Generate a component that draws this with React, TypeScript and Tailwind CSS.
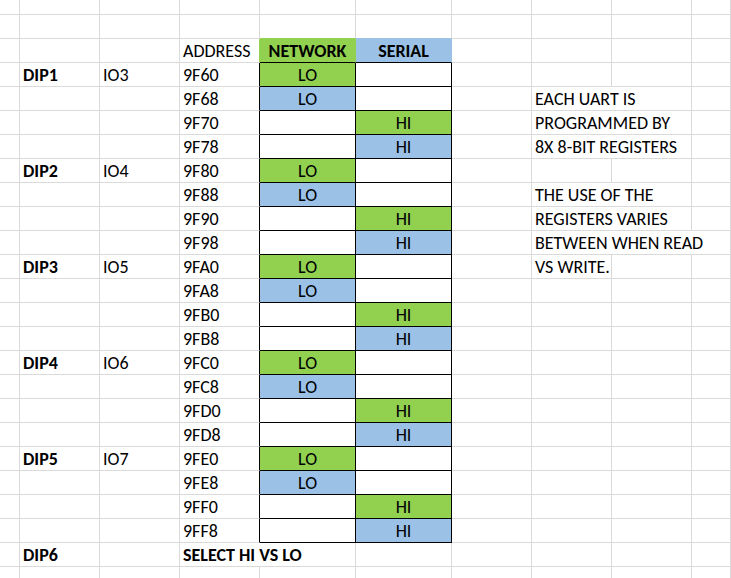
import React from "react";

const GREEN = "bg-[#92d050]";
const BLUE = "bg-[#9bc2e6]";

type CellProps = {
  children?: React.ReactNode;
  span?: 1 | 2 | 3;
  cls?: string;
  center?: boolean;
  bold?: boolean;
};

function Cell({ children, span = 1, cls = "", center = false, bold = false }: CellProps) {
  const spanCls = span === 3 ? "col-span-3" : span === 2 ? "col-span-2" : "";
  return (
    <div
      className={`${spanCls} border-r border-b border-[#dadada] flex items-end whitespace-nowrap overflow-visible pb-[1px] ${
        center ? "justify-center" : "pl-[3px]"
      } ${bold ? "font-bold" : ""} ${cls}`}
    >
      {children}
    </div>
  );
}

const addrs = [
  "9F60", "9F68", "9F70", "9F78",
  "9F80", "9F88", "9F90", "9F98",
  "9FA0", "9FA8", "9FB0", "9FB8",
  "9FC0", "9FC8", "9FD0", "9FD8",
  "9FE0", "9FE8", "9FF0", "9FF8",
];

const notes: Record<number, { text: string; span: 1 | 2 | 3 }> = {
  1: { text: "EACH UART IS", span: 2 },
  2: { text: "PROGRAMMED BY", span: 2 },
  3: { text: "8X 8-BIT REGISTERS", span: 2 },
  5: { text: "THE USE OF THE", span: 2 },
  6: { text: "REGISTERS VARIES", span: 2 },
  7: { text: "BETWEEN WHEN READ", span: 3 },
  8: { text: "VS WRITE.", span: 1 },
};

function EmptyCells({ n, cls = "" }: { n: number; cls?: string }) {
  return (
    <>
      {Array.from({ length: n }).map((_, i) => (
        <Cell key={i} cls={cls} />
      ))}
    </>
  );
}

export default function App() {
  const rows: React.ReactNode[] = [];

  rows.push(<EmptyCells key="r0" n={10} />);
  rows.push(
    <React.Fragment key="r1">
      <EmptyCells n={4} />
      <Cell cls="border-b-[#92d050]" />
      <Cell cls="border-b-[#9bc2e6]" />
      <EmptyCells n={4} />
    </React.Fragment>
  );
  rows.push(
    <React.Fragment key="r2">
      <EmptyCells n={3} />
      <Cell cls="border-r-[#92d050]">ADDRESS</Cell>
      <Cell center bold cls={`${GREEN} border-r-[#92d050] border-b-black`}>
        NETWORK
      </Cell>
      <Cell center bold cls={`${BLUE} border-r-[#9bc2e6] border-b-black`}>
        SERIAL
      </Cell>
      <EmptyCells n={4} />
    </React.Fragment>
  );

  addrs.forEach((a, i) => {
    const g = Math.floor(i / 4);
    const k = i % 4;
    const note = notes[i];
    const dCls = k === 0 ? GREEN : k === 1 ? BLUE : "";
    const eCls = k === 2 ? GREEN : k === 3 ? BLUE : "";
    const noteSpan = note ? note.span : 1;
    rows.push(
      <React.Fragment key={`d${i}`}>
        <Cell />
        <Cell bold>{k === 0 ? `DIP${g + 1}` : null}</Cell>
        <Cell>{k === 0 ? `IO${g + 3}` : null}</Cell>
        <Cell cls="border-r-black">{a}</Cell>
        <Cell center cls={`${dCls} border-r-black border-b-black`}>
          {k < 2 ? "LO" : null}
        </Cell>
        <Cell center cls={`${eCls} border-r-black border-b-black`}>
          {k >= 2 ? "HI" : null}
        </Cell>
        <Cell />
        <Cell span={noteSpan}>{note ? note.text : null}</Cell>
        <EmptyCells n={3 - noteSpan} />
      </React.Fragment>
    );
  });

  rows.push(
    <React.Fragment key="r23">
      <Cell />
      <Cell bold>DIP6</Cell>
      <Cell />
      <Cell bold span={2}>
        SELECT HI VS LO
      </Cell>
      <EmptyCells n={5} />
    </React.Fragment>
  );
  rows.push(<EmptyCells key="r24" n={10} />);

  return (
    <div
      className="w-[731px] h-[578px] overflow-hidden bg-white text-[#000000] text-[18px] leading-[20px]"
      style={{ fontFamily: 'Calibri, Carlito, Lato, "Noto Sans", sans-serif' }}
    >
      <div className="grid grid-cols-[20px_80px_80px_80px_96px_96px_80px_80px_80px_1fr] grid-rows-[15px_repeat(23,24px)_24px]">
        {rows}
      </div>
    </div>
  );
}
